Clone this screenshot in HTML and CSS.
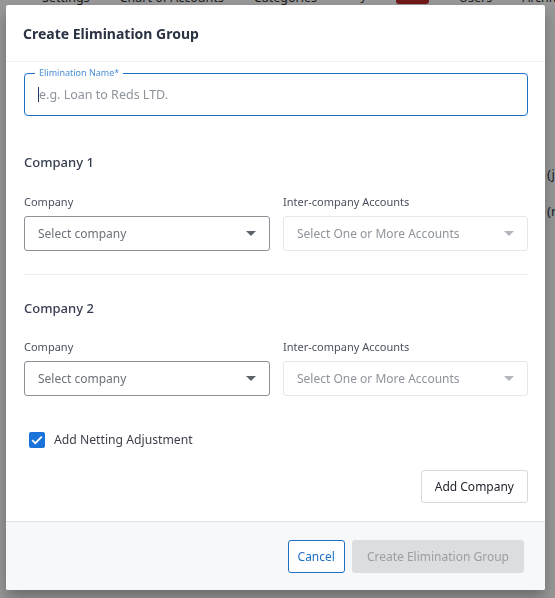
FILE: index.html
```html
<!DOCTYPE html>
<html lang="en">

<head>
    <meta charset="UTF-8">
    <title>Create Elimination Group</title>
    <link rel="stylesheet" href="styles.css">
</head>

<body>
    <nav class="top-nav">
        <a>Settings</a><a>Chart of Accounts</a><a>Categories</a><a>Layouts <span class="new-badge">New</span></a><a>Users</a><a>Archive</a>
    </nav>
    <div class="page-behind">
        <p>(j</p>
        <p>(r</p>
    </div>

    <div class="overlay"></div>

    <div class="modal">
        <div class="modal-header">
            <h1>Create Elimination Group</h1>
        </div>

        <div class="modal-body">
            <div class="name-field">
                <label class="float-label">Elimination Name*</label>
                <span class="caret"></span><span class="placeholder">e.g. Loan to Reds LTD.</span>
            </div>

            <section class="company-block">
                <h2>Company 1</h2>
                <div class="field-row">
                    <div class="field">
                        <label>Company</label>
                        <div class="select">Select company<span class="arrow"></span></div>
                    </div>
                    <div class="field">
                        <label>Inter-company Accounts</label>
                        <div class="select disabled">Select One or More Accounts<span class="arrow"></span></div>
                    </div>
                </div>
            </section>

            <hr class="divider">

            <section class="company-block second">
                <h2>Company 2</h2>
                <div class="field-row">
                    <div class="field">
                        <label>Company</label>
                        <div class="select">Select company<span class="arrow"></span></div>
                    </div>
                    <div class="field">
                        <label>Inter-company Accounts</label>
                        <div class="select disabled">Select One or More Accounts<span class="arrow"></span></div>
                    </div>
                </div>
            </section>

            <div class="netting">
                <span class="checkbox">
                    <svg width="12" height="10" viewBox="0 0 12 10"><path d="M1.2 5.2 L4.3 8.2 L10.8 1.6" fill="none" stroke="#fff" stroke-width="1.8"/></svg>
                </span>
                Add Netting Adjustment
            </div>

            <div class="add-row">
                <button class="btn-outline">Add Company</button>
            </div>
        </div>

        <div class="modal-footer">
            <button class="btn-cancel">Cancel</button>
            <button class="btn-disabled">Create Elimination Group</button>
        </div>
    </div>
</body>

</html>
```

FILE: styles.css
```css
html, body {
    margin: 0;
    padding: 0;
    height: 100%;
}

body {
    font-family: "Noto Sans", "Liberation Sans", sans-serif;
    background-color: #fff;
    color: #2f3747;
    overflow: hidden;
}

/* the app behind the dialog, mostly hidden */
.top-nav {
    display: flex;
    align-items: flex-end;
    gap: 30px;
    padding: 0 42px;
    height: 4px;
    font-size: 12.5px;
    line-height: 1;
    color: #333;
    white-space: nowrap;
}

.new-badge {
    display: inline-block;
    background-color: #c0292a;
    color: #fff;
    font-size: 10px;
    padding: 2px 6px 3px;
    border-radius: 3px;
}

.page-behind {
    padding: 164px 0 0 547px;
    font-size: 13px;
    line-height: 1;
}

.page-behind p {
    margin: 0 0 24px;
}

.overlay {
    position: fixed;
    inset: 0;
    background-color: rgba(0, 0, 0, 0.4);
}

/* dialog */
.modal {
    position: absolute;
    top: 5px;
    left: 6px;
    width: 539px;
    background-color: #fff;
    border-radius: 2px;
    box-shadow: 0 8px 16px rgba(0, 0, 0, 0.3);
    overflow: hidden;
}

.modal-header {
    height: 56px;
    border-bottom: 1px solid #f0f1f3;
    display: flex;
    align-items: center;
    padding: 0 17px;
}

.modal-header h1 {
    margin: 0;
    font-size: 14px;
    font-weight: 700;
    color: #2b3243;
}

.modal-body {
    padding: 11px 17px 18px 18px;
}

.name-field {
    position: relative;
    height: 43px;
    padding: 0 0 0 13px;
    border: 1px solid #1f6fc5;
    border-radius: 4px;
    box-sizing: border-box;
    display: flex;
    align-items: center;
}

/* label sits over the top border */
.float-label {
    position: absolute;
    top: -6px;
    left: 10px;
    padding: 0 4px;
    background-color: #fff;
    font-size: 9px;
    line-height: 10px;
    color: #4a8fd6;
}

.caret {
    width: 1px;
    height: 15px;
    background-color: #1f3b6b;
}

.placeholder {
    font-size: 12.5px;
    color: #8e939b;
}

.company-block {
    padding-top: 35px;
}

.company-block.second {
    padding-top: 22px;
}

.company-block h2 {
    margin: 0 0 22px;
    font-size: 13px;
    font-weight: 500;
    color: #343c4f;
    line-height: 22px;
}

.company-block.second h2 {
    margin-bottom: 21px;
}

.field-row {
    display: grid;
    grid-template-columns: 246px 245px;
    gap: 13px;
}

.field label {
    display: block;
    font-size: 11px;
    color: #4a505e;
    line-height: 14px;
    margin-bottom: 7px;
}

.select {
    height: 35px;
    box-sizing: border-box;
    border: 1px solid #8c9097;
    border-radius: 3px;
    display: flex;
    align-items: center;
    justify-content: space-between;
    padding: 0 13px;
    font-size: 12px;
    color: #6c717a;
}

.select.disabled {
    border-color: #e6e7ea;
    color: #8f939b;
}

.arrow {
    width: 0;
    height: 0;
    border-left: 5px solid transparent;
    border-right: 5px solid transparent;
    border-top: 5px solid #5d626b;
}

.select.disabled .arrow {
    border-top-color: #b3b6bc;
}

.divider {
    border: 0;
    height: 1px;
    background-color: #ebecef;
    margin: 23px 0 0;
}

.netting {
    display: flex;
    align-items: center;
    gap: 9px;
    margin: 35px 0 0 5px;
    font-size: 12.2px;
    color: #3b3f47;
}

.checkbox {
    width: 16px;
    height: 16px;
    background-color: #1a73d9;
    border-radius: 2px;
    display: flex;
    align-items: center;
    justify-content: center;
}

.add-row {
    display: flex;
    justify-content: flex-end;
    margin-top: 22px;
}

button {
    font-family: inherit;
    font-size: 12px;
    border-radius: 3px;
    cursor: pointer;
}

.btn-outline {
    height: 33px;
    padding: 0 13px;
    background-color: #fff;
    border: 1px solid #d6d8dc;
    color: #22262d;
}

.modal-footer {
    background-color: #f7f8fa;
    border-top: 1px solid #dfe1e5;
    height: 68px;
    display: flex;
    align-items: center;
    justify-content: flex-end;
    gap: 7px;
    padding: 0 21px;
}

.btn-cancel {
    height: 33px;
    padding: 0 9px;
    background-color: #fff;
    border: 1px solid #1f6fc5;
    color: #1f6fc5;
}

.btn-disabled {
    height: 33px;
    padding: 0 14px;
    background-color: #dcdddf;
    border: 1px solid #dcdddf;
    color: #9b9ea4;
}
```
